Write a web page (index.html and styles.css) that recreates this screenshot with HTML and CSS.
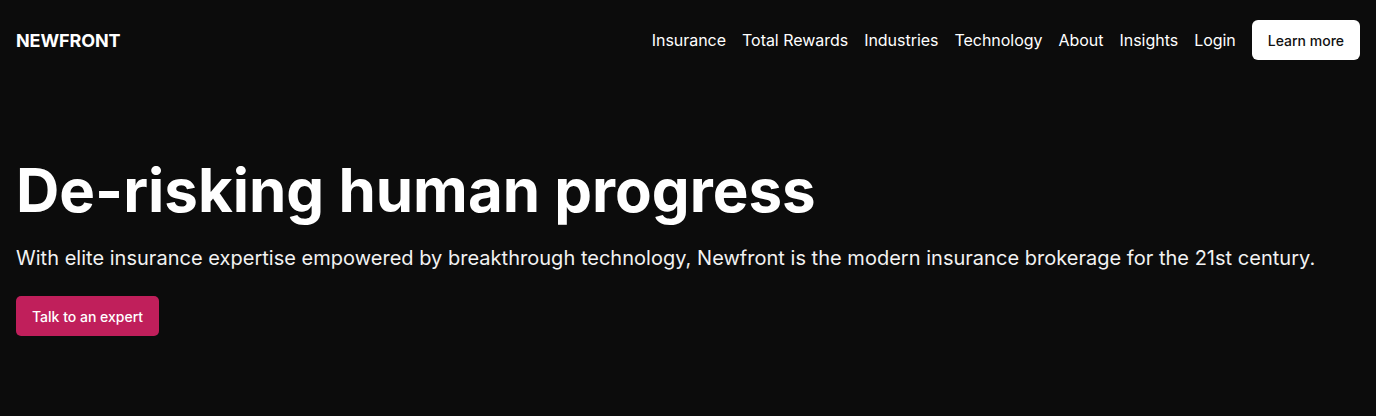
FILE: index.html
```html
<!DOCTYPE html>
<html lang="en">
<head>
<meta charset="utf-8">
<title>Newfront</title>
<link rel="stylesheet" href="styles.css">
</head>
<body>
<header class="nav">
  <div class="logo">NEWFRONT</div>
  <nav class="links">
    <a href="#">Insurance</a>
    <a href="#">Total Rewards</a>
    <a href="#">Industries</a>
    <a href="#">Technology</a>
    <a href="#">About</a>
    <a href="#">Insights</a>
    <a href="#">Login</a>
    <a href="#" class="btn-light">Learn more</a>
  </nav>
</header>
<main class="hero">
  <h1>De-risking human progress</h1>
  <p>With elite insurance expertise empowered by breakthrough technology, Newfront is the modern insurance brokerage for the 21st century.</p>
  <a href="#" class="btn-pink">Talk to an expert</a>
</main>
</body>
</html>
```
FILE: styles.css
```css
html, body {
  margin: 0;
  padding: 0;
  background: #0c0c0c;
  color: #ffffff;
  font-family: Inter, "Noto Sans", sans-serif;
  height: 100%;
}
a { color: inherit; text-decoration: none; }
.nav {
  display: flex;
  justify-content: space-between;
  align-items: center;
  padding: 20px 16px;
}
.logo {
  font-weight: 700;
  font-size: 18px;
  letter-spacing: -0.1px;
}
.links {
  display: flex;
  align-items: center;
  gap: 16px;
  font-size: 16px;
  letter-spacing: -0.03px;
}
.btn-light {
  background: #ffffff;
  color: #111;
  height: 40px;
  display: flex;
  align-items: center;
  padding: 0 16px;
  border-radius: 6px;
  font-size: 14px;
  font-weight: 500;
  letter-spacing: 0;
}
.hero {
  padding: 74px 16px 0;
}
h1 {
  margin: 0;
  font-size: 60px;
  font-weight: 700;
  line-height: 72px;
  letter-spacing: 0;
}
.hero p {
  margin: 18px 0 0;
  font-size: 20px;
  line-height: 28px;
  color: #f2f2f2;
  letter-spacing: 0.02px;
}
.btn-pink {
  display: inline-flex;
  align-items: center;
  margin-top: 24px;
  height: 40px;
  padding: 0 16px;
  background: #c01f5b;
  border-radius: 5px;
  font-size: 14px;
  font-weight: 500;
}
```
